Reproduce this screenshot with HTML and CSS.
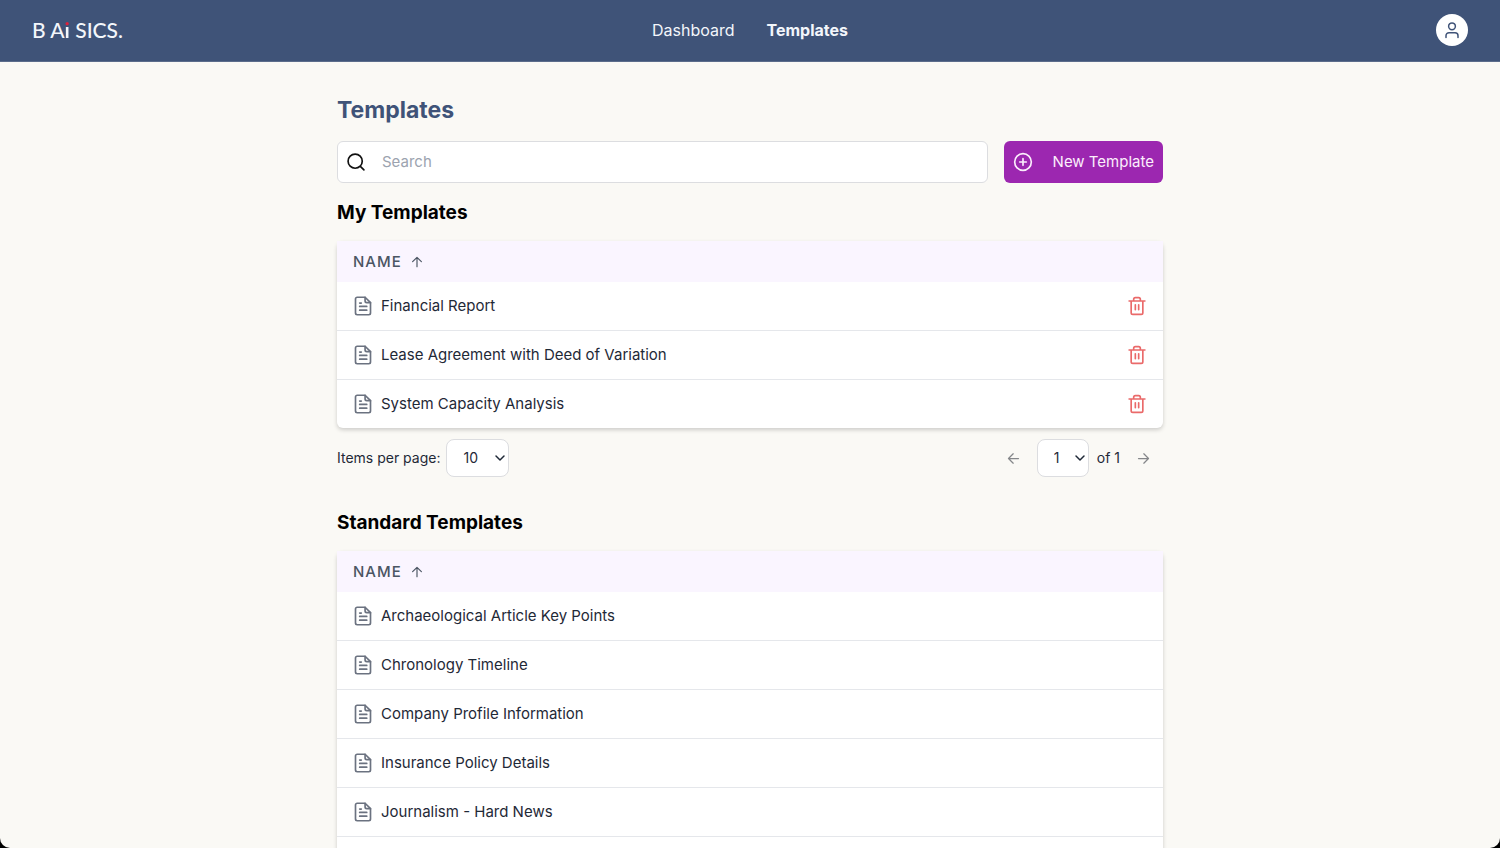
FILE: index.html
```html
<!DOCTYPE html>
<html lang="en">
<head>
  <meta charset="UTF-8">
  <meta name="viewport" content="width=device-width, initial-scale=1">
  <title>Templates</title>
  <link rel="stylesheet" href="styles.css">
</head>
<body>
  <!-- shared icons -->
  <svg class="sprite" aria-hidden="true">
    <symbol id="icon-doc" viewBox="0 0 24 24">
      <path d="M14.500 1.500H5a2 2 0 0 0-2 2v17a2 2 0 0 0 2 2h14a2 2 0 0 0 2-2V8z"/>
      <path d="M14.500 1.500V6a2 2 0 0 0 2 2H21M8 8.500h2M8 12.500h8.500M8 17h8.500"/>
    </symbol>
    <symbol id="icon-trash" viewBox="0 0 24 24">
      <path d="M2.500 6h19M19 6v14a2 2 0 0 1-2 2H7a2 2 0 0 1-2-2V6M8 6V4a2 2 0 0 1 2-2h4a2 2 0 0 1 2 2v2M10 10.500v6M14 10.500v6"/>
    </symbol>
    <symbol id="icon-arrow" viewBox="0 0 24 24">
      <path d="M12 20V4M4.500 11.500L12 4l7.500 7.500"/>
    </symbol>
  </svg>

  <div class="app">
    <header class="navbar">
      <a href="#" class="logo">B A<span class="logo-i">i</span> SICS.</a>
      <nav class="nav-links">
        <a href="#">Dashboard</a>
        <a href="#" class="active">Templates</a>
      </nav>
      <button type="button" class="avatar" aria-label="Account">
        <svg class="icon" viewBox="0 0 24 24"><circle cx="12" cy="7" r="4.500"/><path d="M4 22v-2.500a4 4 0 0 1 4-4h8a4 4 0 0 1 4 4V22"/></svg>
      </button>
    </header>

    <main class="container">
      <h1>Templates</h1>
      <div class="toolbar">
        <div class="search">
          <svg class="icon" viewBox="0 0 24 24"><circle cx="11" cy="11" r="8.500"/><path d="M17.500 17.500L21.500 21.500"/></svg>
          <input type="text" placeholder="Search" aria-label="Search">
        </div>
        <button type="button" class="btn-new">
          <svg class="icon" viewBox="0 0 24 24"><circle cx="12" cy="12" r="10"/><path d="M12 8v8M8 12h8"/></svg>
          New Template
        </button>
      </div>

      <section>
        <h2>My Templates</h2>
        <table class="templates">
          <thead>
            <tr><th colspan="2"><span class="cell">Name <svg class="icon sort"><use href="#icon-arrow"/></svg></span></th></tr>
          </thead>
          <tbody>
            <tr>
              <td><span class="cell"><svg class="icon doc"><use href="#icon-doc"/></svg>Financial Report</span></td>
              <td class="actions"><button type="button" aria-label="Delete Financial Report"><svg class="icon"><use href="#icon-trash"/></svg></button></td>
            </tr>
            <tr>
              <td><span class="cell"><svg class="icon doc"><use href="#icon-doc"/></svg>Lease Agreement with Deed of Variation</span></td>
              <td class="actions"><button type="button" aria-label="Delete Lease Agreement with Deed of Variation"><svg class="icon"><use href="#icon-trash"/></svg></button></td>
            </tr>
            <tr>
              <td><span class="cell"><svg class="icon doc"><use href="#icon-doc"/></svg>System Capacity Analysis</span></td>
              <td class="actions"><button type="button" aria-label="Delete System Capacity Analysis"><svg class="icon"><use href="#icon-trash"/></svg></button></td>
            </tr>
          </tbody>
        </table>

        <div class="pagination">
          <div class="per-page">
            <label for="per-page">Items per page:</label>
            <span class="select">
              <select id="per-page"><option>10</option><option>25</option><option>50</option></select>
              <svg class="icon" viewBox="0 0 12 12"><path d="M2 4l4 4 4-4"/></svg>
            </span>
          </div>
          <div class="pager">
            <button type="button" aria-label="Previous page"><svg class="icon prev"><use href="#icon-arrow"/></svg></button>
            <span class="select page">
              <select id="page" aria-label="Page"><option>1</option></select>
              <svg class="icon" viewBox="0 0 12 12"><path d="M2 4l4 4 4-4"/></svg>
            </span>
            <label for="page">of 1</label>
            <button type="button" aria-label="Next page"><svg class="icon next"><use href="#icon-arrow"/></svg></button>
          </div>
        </div>
      </section>

      <section>
        <h2>Standard Templates</h2>
        <table class="templates">
          <thead>
            <tr><th><span class="cell">Name <svg class="icon sort"><use href="#icon-arrow"/></svg></span></th></tr>
          </thead>
          <tbody>
            <tr><td><span class="cell"><svg class="icon doc"><use href="#icon-doc"/></svg>Archaeological Article Key Points</span></td></tr>
            <tr><td><span class="cell"><svg class="icon doc"><use href="#icon-doc"/></svg>Chronology Timeline</span></td></tr>
            <tr><td><span class="cell"><svg class="icon doc"><use href="#icon-doc"/></svg>Company Profile Information</span></td></tr>
            <tr><td><span class="cell"><svg class="icon doc"><use href="#icon-doc"/></svg>Insurance Policy Details</span></td></tr>
            <tr><td><span class="cell"><svg class="icon doc"><use href="#icon-doc"/></svg>Journalism - Hard News</span></td></tr>
            <tr><td></td></tr>
          </tbody>
        </table>
      </section>
    </main>
  </div>
</body>
</html>
```
FILE: styles.css
```css
* {
  box-sizing: border-box;
}
body {
  margin: 0;
  background: #000;
  color: #1f2937;
  font-family: Inter, "Liberation Sans", sans-serif;
  font-size: 15px;
  line-height: 24px;
}
button, input, select {
  font: inherit;
  color: inherit;
}
button {
  display: flex;
  align-items: center;
  padding: 0;
  border: none;
  background: none;
  cursor: pointer;
}
a {
  color: inherit;
  text-decoration: none;
}
.sprite {
  display: none;
}
.icon {
  flex: none;
  width: 20px;
  height: 20px;
  fill: none;
  stroke: currentColor;
  stroke-width: 2;
  stroke-linecap: round;
  stroke-linejoin: round;
}
.app {
  height: 100vh;
  overflow: hidden auto;
  scrollbar-width: none;
  background: #faf9f5;
  border-radius: 0 0 10px 10px;
}

/* top bar */
.navbar {
  display: grid;
  grid-template-columns: 1fr auto 1fr;
  align-items: center;
  padding: 14px 32px 15px;
  background: #3f5378;
  border-bottom: 1px solid #5b6c8b;
  color: #f3f6fb;
}
.logo {
  font-family: Lato, sans-serif;
  font-size: 21px;
  font-weight: 500;
}
.logo-i {
  background: linear-gradient(#e0203a 40%, #f3f6fb 40%);
  background-clip: text;
  color: transparent;
  font-weight: 700;
}
.nav-links {
  display: flex;
  gap: 32px;
  font-size: 16px;
}
.nav-links .active {
  font-weight: 700;
}
.avatar {
  justify-self: end;
  justify-content: center;
  width: 32px;
  height: 32px;
  border-radius: 50%;
  background: #fff;
  color: #3f5378;
}
.avatar .icon {
  width: 18px;
  height: 18px;
}

.container {
  max-width: 826px;
  margin: 0 auto;
  padding-top: 32px;
}
h1 {
  margin: 0 0 15px;
  color: #3f5378;
  font-size: 23px;
  line-height: 32px;
}
h2 {
  margin: 0 0 14px;
  color: #000;
  font-size: 19px;
  line-height: 28px;
}
.toolbar {
  display: flex;
  gap: 16px;
  margin-bottom: 16px;
}
.search {
  flex: 1;
  display: flex;
  align-items: center;
  gap: 16px;
  height: 42px;
  padding-left: 8px;
  background: #fff;
  border: 1px solid #dcdde0;
  border-radius: 6px;
  color: #111;
}
.search input {
  flex: 1;
  min-width: 0;
  padding: 0;
  border: none;
  outline: none;
  background: none;
}
.search input::placeholder {
  color: #9ca3af;
}
.btn-new {
  gap: 20px;
  padding: 0 9px;
  border-radius: 6px;
  background: #9c27b0;
  color: #fbeefc;
}

/* tables */
.templates {
  width: 100%;
  border-spacing: 0;
  background: #fff;
  border-radius: 6px;
  box-shadow: 0 2px 4px rgba(0,0,0,0.18);
}
.templates th {
  height: 41px;
  padding: 0 16px;
  background: #faf5ff;
  color: #4b5563;
  font-weight: 500;
  letter-spacing: 1px;
  text-align: left;
  text-transform: uppercase;
}
.templates td {
  height: 49px;
  padding: 0 16px;
  border-bottom: 1px solid #e5e7eb;
}
.templates tr:last-child td {
  height: 48px;
  border-bottom: none;
}
.cell {
  display: flex;
  align-items: center;
  gap: 8px;
}
.icon.doc {
  color: #6b7280;
}
.icon.sort {
  width: 14px;
  height: 14px;
}
.templates .actions button {
  margin-left: auto;
  color: #ea6a6a;
}

/* pagination */
.pagination {
  display: flex;
  justify-content: space-between;
  align-items: center;
  margin: 11px 0 32px;
  font-size: 14px;
}
.per-page, .pager {
  display: flex;
  align-items: center;
  gap: 8px;
}
.per-page {
  gap: 6px;
}
.pager {
  padding-right: 12px;
}
.pager button {
  color: #85878a;
}
.pager button .icon {
  width: 15px;
  height: 15px;
}
.pager button:first-child {
  margin-right: 8px;
}
.pager button:last-child {
  margin-left: 8px;
}
.icon.prev {
  transform: rotate(-90deg);
}
.icon.next {
  transform: rotate(90deg);
}
.select {
  position: relative;
}
.select select {
  display: block;
  width: 63px;
  height: 38px;
  padding: 0 16px;
  appearance: none;
  background: #fff;
  border: 1px solid #dcdde0;
  border-radius: 8px;
}
.select.page select {
  width: 52px;
}
.select .icon {
  position: absolute;
  top: 13px;
  right: 3px;
  width: 12px;
  height: 12px;
  stroke-width: 1.5;
  pointer-events: none;
}
```
